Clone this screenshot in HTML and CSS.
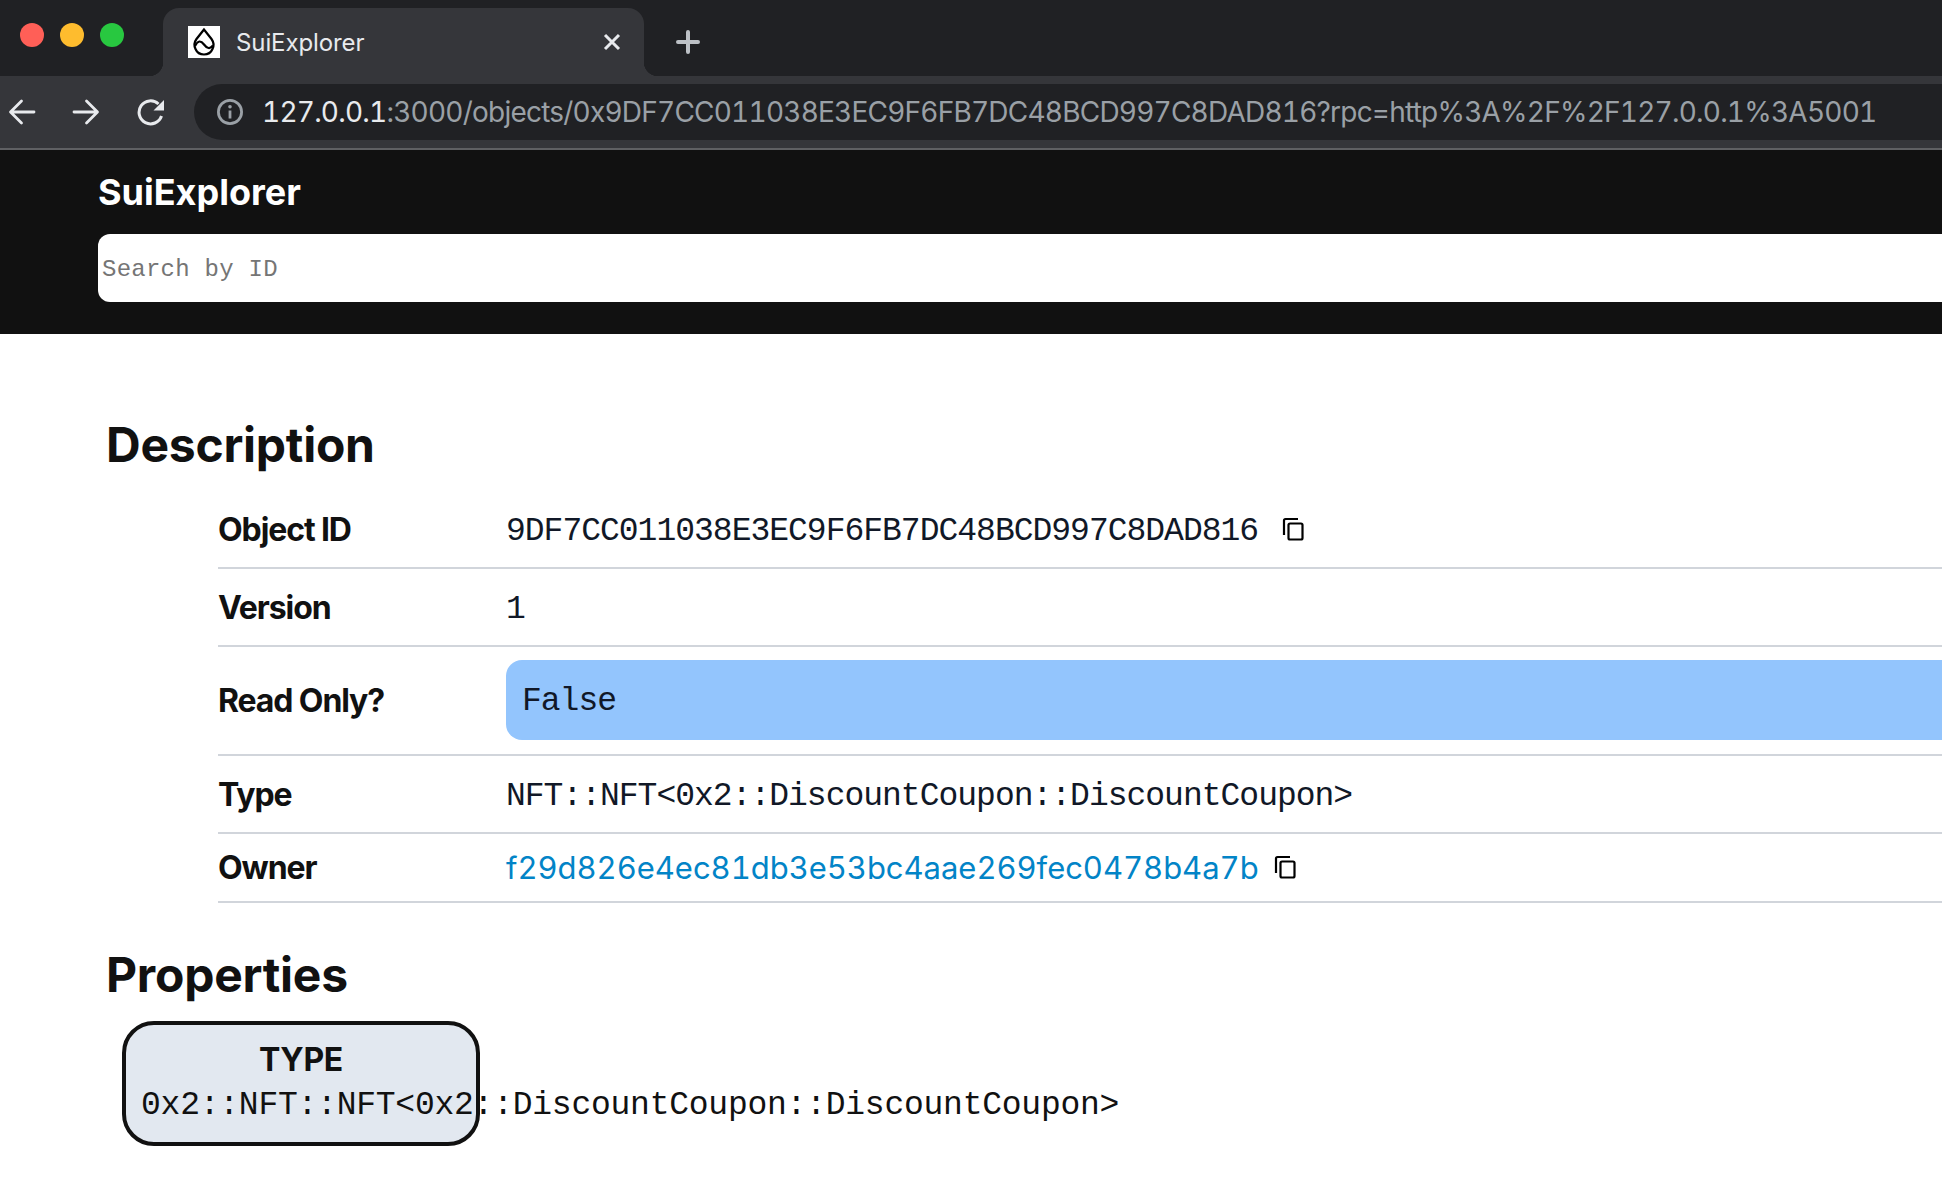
FILE: index.html
```html
<!DOCTYPE html>
<html lang="en">
<head>
    <meta charset="UTF-8">
    <title>SuiExplorer</title>
    <link rel="stylesheet" href="styles.css">
</head>
<body>
<div class="tabstrip">
    <div class="lights">
        <span class="light red"></span>
        <span class="light yellow"></span>
        <span class="light green"></span>
    </div>
    <div class="tab">
        <svg class="favicon" viewBox="0 0 32 32">
            <rect width="32" height="32" fill="#fff"/>
            <path d="M16 3.500L8.500 13C6 16.500 6 20 7.500 23 9 26.500 12.500 28.500 16 28.500S23 26.500 24.500 23C26 20 26 16.500 23.500 13z" fill="none" stroke="#000" stroke-width="2.200"/>
            <path d="M7 20C10 14 13 14.500 16 18.500S22 23.500 25 19.500" fill="none" stroke="#000" stroke-width="2.200"/>
        </svg>
        <span class="tab-title">SuiExplorer</span>
        <svg class="tab-close" viewBox="0 0 18 18">
            <path d="M2 2L16 16M16 2L2 16" stroke="#e8eaed" stroke-width="3" fill="none"/>
        </svg>
    </div>
    <svg class="new-tab" viewBox="0 0 24 24">
        <path d="M12 2V22M2 12H22" stroke="#bdc1c6" stroke-width="4" stroke-linecap="round" fill="none"/>
    </svg>
</div>
<div class="toolbar">
    <svg class="nav-icon first" viewBox="0 0 28 28">
        <path d="M26 14H3M13.500 3L2.500 14L13.500 25" stroke="#e8eaed" stroke-width="2.800" stroke-linecap="round" stroke-linejoin="round" fill="none"/>
    </svg>
    <svg class="nav-icon" viewBox="0 0 28 28">
        <path d="M2 14H25M14.500 3L25.500 14L14.500 25" stroke="#e8eaed" stroke-width="2.800" stroke-linecap="round" stroke-linejoin="round" fill="none"/>
    </svg>
    <svg class="nav-icon reload" viewBox="0 0 28 28">
        <path d="M24.500 18A11.500 11.500 0 1 1 21.500 6" stroke="#e8eaed" stroke-width="3" fill="none"/>
        <path d="M27 2V12.500H16.500z" fill="#e8eaed"/>
    </svg>
    <div class="omnibox">
        <svg class="info-icon" viewBox="0 0 26 26">
            <circle cx="13" cy="13" r="11.600" stroke="#9aa0a6" stroke-width="2.800" fill="none"/>
            <path d="M13 11.500V19.500" stroke="#9aa0a6" stroke-width="2.800"/>
            <circle cx="13" cy="7.800" r="1.800" fill="#9aa0a6"/>
        </svg>
        <span class="url"><span class="url-host">127.0.0.1</span>:3000/objects/0x9DF7CC011038E3EC9F6FB7DC48BCD997C8DAD816?rpc=http%3A%2F%2F127.0.0.1%3A5001</span>
    </div>
</div>

<div class="site-header">
    <div class="brand">SuiExplorer</div>
    <input class="search" type="text" placeholder="Search by ID">
</div>

<div class="content">
    <h2 class="heading">Description</h2>
    <div class="details">
        <div class="row row-id">
            <div class="label">Object ID</div>
            <div class="value">9DF7CC011038E3EC9F6FB7DC48BCD997C8DAD816</div>
            <svg class="copy copy-id" viewBox="0 0 24 24"><use href="#copy-shape"/></svg>
        </div>
        <div class="row">
            <div class="label">Version</div>
            <div class="value">1</div>
        </div>
        <div class="row row-flag">
            <div class="label">Read Only?</div>
            <div class="value flag">False</div>
        </div>
        <div class="row">
            <div class="label">Type</div>
            <div class="value">NFT::NFT&lt;0x2::DiscountCoupon::DiscountCoupon&gt;</div>
        </div>
        <div class="row row-owner">
            <div class="label">Owner</div>
            <a class="owner-link" href="#">f29d826e4ec81db3e53bc4aae269fec0478b4a7b</a>
            <svg class="copy copy-owner" viewBox="0 0 24 24"><use href="#copy-shape"/></svg>
        </div>
    </div>

    <h2 class="heading heading-props">Properties</h2>
    <div class="prop-card">
        <div class="prop-name">TYPE</div>
        <div class="prop-value">0x2::NFT::NFT&lt;0x2::DiscountCoupon::DiscountCoupon&gt;</div>
    </div>
</div>

<svg width="0" height="0" class="defs">
    <defs>
        <g id="copy-shape" fill="none" stroke="#000" stroke-width="2.200">
            <path d="M3 18V3.500Q3 2 4.500 2H17"/>
            <rect x="7.500" y="6.500" width="14" height="16" rx="1.500"/>
        </g>
    </defs>
</svg>
</body>
</html>
```

FILE: styles.css
```css
html, body {
    margin: 0;
    padding: 0;
    overflow: hidden;
    background: #fff;
}

body {
    height: 1198px;
    font-family: "Inter", "Liberation Sans", sans-serif;
    color: #111;
}

/* browser chrome */
.tabstrip {
    display: flex;
    align-items: flex-start;
    height: 68px;
    padding-top: 8px;
    background: #202124;
}

.lights {
    display: flex;
    gap: 16px;
    margin: 15px 0 0 20px;
}

.light {
    width: 24px;
    height: 24px;
    border-radius: 50%;
}

.red { background: #ff5f57; }
.yellow { background: #febc2e; }
.green { background: #28c840; }

.tab {
    position: relative;
    display: flex;
    align-items: center;
    width: 481px;
    height: 68px;
    margin-left: 39px;
    padding: 0 23px 0 25px;
    box-sizing: border-box;
    border-radius: 16px 16px 0 0;
    background: #35363a;
}

.tab::before, .tab::after {
    content: "";
    position: absolute;
    bottom: 0;
    width: 14px;
    height: 14px;
}

.tab::before {
    left: -14px;
    background: radial-gradient(circle at 0 0, transparent 14px, #35363a 14.500px);
}

.tab::after {
    right: -14px;
    background: radial-gradient(circle at 100% 0, transparent 14px, #35363a 14.500px);
}

.favicon {
    width: 32px;
    height: 32px;
}

.tab-title {
    flex: 1;
    margin-left: 16px;
    font-size: 24px;
    letter-spacing: -0.100px;
    color: #e8eaed;
}

.tab-close {
    width: 18px;
    height: 18px;
}

.new-tab {
    width: 24px;
    height: 24px;
    margin: 22px 0 0 32px;
}

.toolbar {
    display: flex;
    align-items: center;
    height: 72px;
    border-bottom: 2px solid #5f6063;
    background: #35363a;
}

.nav-icon {
    flex: none;
    width: 28px;
    height: 28px;
    margin-left: 36px;
}

.nav-icon.first {
    margin-left: 8px;
}

.nav-icon.reload {
    margin-left: 37px;
}

.omnibox {
    display: flex;
    flex: 1;
    min-width: 0;
    align-items: center;
    height: 56px;
    margin-left: 29px;
    padding-left: 23px;
    border-radius: 28px 0 0 28px;
    background: #202124;
}

.info-icon {
    flex: none;
    width: 26px;
    height: 26px;
}

.url {
    margin-left: 19px;
    font-size: 28px;
    font-variant-numeric: tabular-nums;
    letter-spacing: -0.780px;
    white-space: nowrap;
    color: #9aa0a6;
}

.url-host {
    color: #e8eaed;
}

/* site header */
.site-header {
    height: 184px;
    padding-left: 98px;
    box-sizing: border-box;
    background: #111;
}

.brand {
    padding-top: 20px;
    font-size: 36px;
    line-height: 44px;
    font-weight: 700;
    color: #fff;
}

.search {
    display: block;
    width: 100%;
    height: 68px;
    margin-top: 20px;
    padding: 3px 0 0 4px;
    box-sizing: border-box;
    border: none;
    border-radius: 12px 0 0 12px;
    background: #fff;
    font-family: "Liberation Mono", monospace;
    font-size: 24px;
    letter-spacing: 0.250px;
}

.search::placeholder {
    color: #757575;
}

/* page content */
.content {
    padding: 80px 0 0 106px;
}

.heading {
    margin: 0;
    font-size: 48px;
    line-height: 62px;
    font-weight: 700;
    letter-spacing: -0.250px;
}

.heading-props {
    margin-top: 41px;
}

.details {
    margin: 15px 0 0 112px;
}

.row {
    display: flex;
    align-items: center;
    min-height: 76px;
    border-bottom: 2px solid #d1d5db;
}

.row-flag {
    min-height: 107px;
}

.row-owner {
    min-height: 67px;
}

.label {
    flex: none;
    width: 288px;
    font-size: 32px;
    font-weight: 700;
    letter-spacing: -1.100px;
}

.value {
    padding-top: 4px;
    font-family: "Liberation Mono", monospace;
    font-size: 33px;
    letter-spacing: -1px;
    white-space: nowrap;
    color: #111827;
}

.flag {
    flex: 1;
    height: 80px;
    margin-bottom: 2px;
    padding: 0 0 0 16px;
    border-radius: 16px 0 0 16px;
    background: #93c5fd;
    line-height: 84px;
}

.owner-link {
    font-size: 31px;
    letter-spacing: -0.030px;
    text-decoration: none;
    white-space: nowrap;
    color: #0284c7;
    font-variant-numeric: tabular-nums;
}

.copy {
    width: 24px;
    height: 24px;
}

.copy-id {
    margin-left: 23px;
}

.copy-owner {
    margin: 0 0 2px 14px;
}

.defs {
    display: block;
}

.prop-card {
    display: flex;
    flex-direction: column;
    width: 358px;
    height: 125px;
    margin: 15px 0 0 16px;
    padding: 16px 0 0 15px;
    box-sizing: border-box;
    border: 4px solid #111;
    border-radius: 32px;
    background: #e2e8f0;
}

.prop-name {
    margin-right: 15px;
    text-align: center;
    font-size: 32px;
    line-height: 38px;
    font-weight: 700;
    letter-spacing: -0.300px;
}

.prop-value {
    margin-top: 8px;
    font-family: "Liberation Mono", monospace;
    font-size: 33px;
    letter-spacing: -0.240px;
    white-space: nowrap;
    color: #111;
}
```
